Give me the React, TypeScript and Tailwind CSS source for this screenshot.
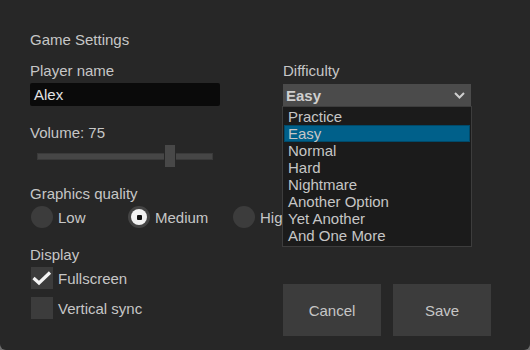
import React from "react";

const difficulties = [
  "Practice",
  "Easy",
  "Normal",
  "Hard",
  "Nightmare",
  "Another Option",
  "Yet Another",
  "And One More",
];

function Radio({ label, checked, width }: { label: string; checked?: boolean; width: string }) {
  return (
    <div className={`flex shrink-0 items-center ${width}`}>
      {checked ? (
        <div className="ml-[1px] flex h-[22px] w-[22px] shrink-0 items-center justify-center rounded-full bg-[#444444]">
          <div className="flex h-[16px] w-[16px] items-center justify-center rounded-full bg-[#f2f2f2]">
            <div className="h-[5px] w-[5px] rounded-[1px] bg-[#111111]" />
          </div>
        </div>
      ) : (
        <div className="ml-[1px] h-[22px] w-[22px] shrink-0 rounded-full bg-[#3c3c3c]" />
      )}
      <span className="ml-[5px] whitespace-nowrap">{label}</span>
    </div>
  );
}

function Checkbox({ label, checked }: { label: string; checked?: boolean }) {
  return (
    <div className="flex h-[22px] items-center">
      <div className="ml-[1px] h-[22px] w-[22px] bg-[#3c3c3c]">
        {checked && (
          <svg width="22" height="22" viewBox="0 0 22 22">
            <path d="M2.5 11 L8 16 L19 5.5" fill="none" stroke="#f4f4f4" strokeWidth="3.2" />
          </svg>
        )}
      </div>
      <span className="ml-[5px]">{label}</span>
    </div>
  );
}

export default function App() {
  return (
    <div className="h-[350px] w-[530px] bg-[#6e6e6e]">
      <div className="h-full rounded-b-[6px] bg-[#272727] pl-[30px] pt-[31px] font-['Liberation_Sans',Arial,sans-serif] text-[15px] leading-[17px] text-[#c6c6c6]">
        <div>Game Settings</div>

        <div className="mt-[14px] flex">
          {/* left column */}
          <div className="flex w-[253px] shrink-0 flex-col">
            <div>Player name</div>
            <div className="mt-[4px] flex h-[23px] w-[190px] items-center rounded-[2px] bg-[#0a0a0a] px-[4px] text-[#e2e2e2]">
              Alex
            </div>

            <div className="mt-[18px]">Volume: 75</div>
            <div className="relative ml-[7px] mt-[4px] flex h-[22px] w-[176px] items-center">
              <div className="h-[7px] w-full border border-[#3a3a3a] bg-[#464646]" />
              <div className="absolute left-[127px] top-0 h-[22px] w-[12px] border-x border-[#272727] bg-[#484848]" />
            </div>

            <div className="mt-[18px]">Graphics quality</div>
            <div className="mt-[4px] flex h-[22px] items-center">
              <Radio label="Low" width="w-[97px]" />
              <Radio label="Medium" checked width="w-[105px]" />
              <Radio label="High" width="w-[80px]" />
            </div>

            <div className="mt-[18px]">Display</div>
            <div className="mt-[4px] flex flex-col gap-[8px]">
              <Checkbox label="Fullscreen" checked />
              <Checkbox label="Vertical sync" />
            </div>
          </div>

          {/* right column */}
          <div className="relative z-10 flex flex-col">
            <div>Difficulty</div>
            <div className="relative mt-[5px]">
              <div className="flex h-[22px] w-[188px] items-center justify-between bg-[#4b4b4b] pl-[3px] pr-[6px] font-bold text-[#cfcfcf]">
                <span>Easy</span>
                <svg width="11" height="7" viewBox="0 0 11 7">
                  <path d="M1 1 L5.5 5.5 L10 1" fill="none" stroke="#cfcfcf" strokeWidth="2" />
                </svg>
              </div>
              <div className="absolute left-[-1px] top-full z-10 h-[141px] w-[190px] border border-[#3d3d3d] bg-[#1b1b1b] px-[1px] pt-[1px]">
                {difficulties.map((d) => (
                  <div
                    key={d}
                    className={
                      d === "Easy"
                        ? "h-[17px] border border-[#004a6a] bg-[#00608a] pl-[3px] leading-[15px]"
                        : "h-[17px] pl-[4px]"
                    }
                  >
                    {d}
                  </div>
                ))}
              </div>
            </div>

            <div className="mt-[178px] flex gap-[12px]">
              <button className="h-[52px] w-[98px] bg-[#3c3c3c] text-[#c6c6c6]">Cancel</button>
              <button className="h-[52px] w-[98px] bg-[#3c3c3c] text-[#c6c6c6]">Save</button>
            </div>
          </div>
        </div>
      </div>
    </div>
  );
}
